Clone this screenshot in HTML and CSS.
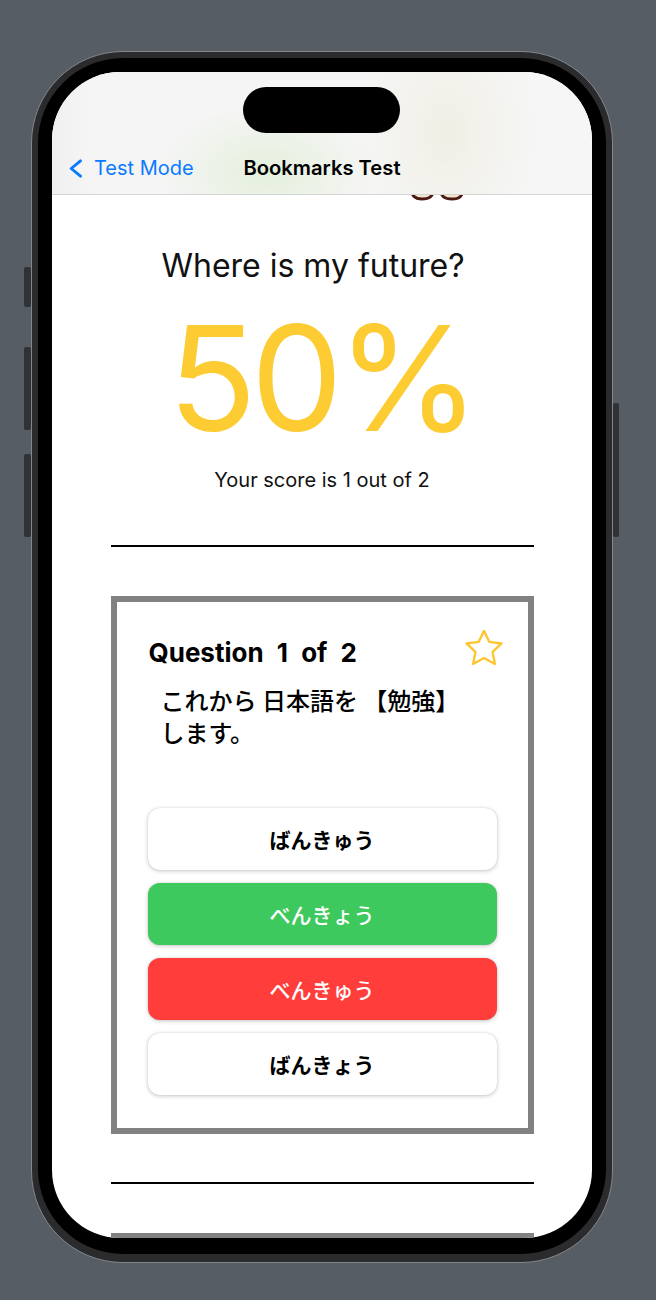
FILE: index.html
```html
<!DOCTYPE html>
<html lang="en">
<head>
<meta charset="utf-8">
<title>Bookmarks Test</title>
<link rel="stylesheet" href="styles.css">
</head>
<body>
<div class="phone">
  <span class="side-btn btn-action"></span>
  <span class="side-btn btn-vol-up"></span>
  <span class="side-btn btn-vol-down"></span>
  <span class="side-btn btn-power"></span>
  <div class="bezel">
    <div class="screen">
      <main class="content">
        <div class="hero">
          <svg class="feet" width="60" height="16" viewBox="0 0 60 16">
            <path d="M3 2 C3 12 8 14 14 14 C21 14 25 12 25 5" fill="#f4e7d2" stroke="#4b1a12" stroke-width="3" stroke-linecap="round"/>
            <path d="M33 5 C33 12 37 14 44 14 C51 14 55 12 55 2" fill="#f4e7d2" stroke="#4b1a12" stroke-width="3" stroke-linecap="round"/>
          </svg>
        </div>
        <h1 class="title">Where is my future?</h1>
        <div class="percent">50%</div>
        <p class="score">Your score is 1 out of 2</p>
        <hr class="divider">
        <section class="card">
          <div class="card-head">
            <h2 class="q-num">Question 1 of 2</h2>
            <svg class="star" width="38" height="37" viewBox="1.6 1.6 20.8 19.8">
              <path d="M12 2.4l2.95 6.05 6.65.85-4.9 4.6 1.25 6.6L12 17.25 6.05 20.5l1.25-6.6-4.9-4.6 6.65-.85z" fill="none" stroke="#fdc631" stroke-width="1.3" stroke-linejoin="round"/>
            </svg>
          </div>
          <p class="q-text">これから 日本語を 【勉強】 します。</p>
          <div class="answers">
            <button class="answer">ばんきゅう</button>
            <button class="answer correct">べんきょう</button>
            <button class="answer wrong">べんきゅう</button>
            <button class="answer">ばんきょう</button>
          </div>
        </section>
        <hr class="divider divider-2">
        <section class="card card-next"></section>
      </main>
      <header class="navbar">
        <div class="island"></div>
        <div class="nav-row">
          <a class="back">
            <svg class="chev" width="15" height="19" viewBox="0 0 15 19">
              <path d="M12.5 1.8 L3.2 9.5 L12.5 17.2" fill="none" stroke="#0a7aff" stroke-width="2.9" stroke-linecap="round" stroke-linejoin="round"/>
            </svg>
            <span>Test Mode</span>
          </a>
          <div class="nav-title">Bookmarks Test</div>
          <div></div>
        </div>
      </header>
    </div>
  </div>
</div>
</body>
</html>
```

FILE: styles.css
```css
html, body {
  margin: 0;
  padding: 0;
}
body {
  background: #575d65;
  width: 656px;
  height: 1300px;
  overflow: hidden;
  font-family: Inter, "Noto Sans", sans-serif;
}

.phone {
  position: relative;
  box-sizing: border-box;
  margin: 51px 0 0 31px;
  width: 582px;
  height: 1212px;
  border: 1px solid #83868a;
  border-radius: 92px;
  background: #2b2b2d;
  padding: 6px 6px 8px 6px;
}
.side-btn {
  position: absolute;
  background: #303236;
  border-radius: 2px;
}
.btn-action { left: -8px; top: 215px; width: 7px; height: 40px; }
.btn-vol-up { left: -8px; top: 295px; width: 7px; height: 83px; }
.btn-vol-down { left: -8px; top: 402px; width: 7px; height: 83px; }
.btn-power { left: 581px; top: 351px; width: 6px; height: 134px; }

.bezel {
  background: #000;
  border-radius: 85px;
  padding: 14px 14px 16px 14px;
}
.screen {
  position: relative;
  width: 540px;
  height: 1166px;
  border-radius: 68px;
  overflow: hidden;
  background: #fff;
}

/* nav bar */
.navbar {
  position: absolute;
  left: 0;
  top: 0;
  width: 540px;
  height: 123px;
  box-sizing: border-box;
  border-bottom: 1px solid #d4d4d4;
  background:
    radial-gradient(ellipse 110px 70px at 215px 100px, rgba(222, 238, 210, 0.7), rgba(222, 238, 210, 0) 100%),
    radial-gradient(ellipse 90px 130px at 395px 60px, rgba(238, 236, 222, 0.7), rgba(238, 236, 222, 0) 100%),
    linear-gradient(90deg, #f0f0f0 0px, #f5f5f5 40px, #f6f6f6 100%);
}
.island {
  position: absolute;
  left: 191px;
  top: 15px;
  width: 157px;
  height: 46px;
  border-radius: 23px;
  background: #000;
}
.nav-row {
  position: absolute;
  left: 0;
  right: 0;
  top: 84px;
  display: grid;
  grid-template-columns: 1fr auto 1fr;
  align-items: start;
  height: 24px;
}
.back {
  display: flex;
  align-items: flex-start;
  padding-left: 16px;
  color: #0a7aff;
  font-size: 20px;
  line-height: 24px;
}
.chev {
  margin-top: 3px;
  margin-right: 11px;
}
.nav-title {
  font-size: 20.2px;
  line-height: 24px;
  font-weight: 600;
  color: #000;
}

/* content */
.content {
  display: flex;
  flex-direction: column;
  align-items: center;
}
.hero {
  height: 129px;
  width: 100%;
  display: flex;
  align-items: flex-end;
  padding-left: 356px;
  box-sizing: border-box;
}
.feet { display: block; }

.title {
  margin: 45px 18px 0 0;
  font-size: 32px;
  line-height: 40px;
  font-weight: 400;
  color: #111;
}
.percent {
  margin-top: 18px;
  font-size: 146px;
  line-height: 148px;
  font-weight: 400;
  color: #fdcb32;
  letter-spacing: -6px;
  padding-right: 2px;
}
.score {
  margin: 16px 0 0 0;
  font-size: 20px;
  line-height: 24px;
  color: #111;
}
.divider {
  box-sizing: border-box;
  width: 423px;
  height: 2px;
  margin: 53px 0 0 0;
  border: none;
  background: #000;
}
.divider-2 {
  margin-top: 48px;
}
.card {
  box-sizing: border-box;
  width: 423px;
  margin-top: 49px;
  border: 6px solid #818181;
  padding: 27px 0 33px 0;
}
.card-next {
  height: 200px;
}
.card-head {
  display: flex;
  justify-content: space-between;
  align-items: flex-start;
  padding: 0 25px 0 32px;
}
.q-num {
  margin: 8px 0 0 0;
  font-size: 26px;
  line-height: 32px;
  font-weight: 700;
  color: #000;
  word-spacing: 7px;
}
.star { display: block; }
.q-text {
  margin: 15px 0 0 0;
  padding: 0 54px 0 44px;
  font-family: "Noto Sans CJK JP", sans-serif;
  font-size: 24px;
  line-height: 32px;
  font-weight: 500;
  color: #000;
}
.answers {
  margin-top: 60px;
  padding: 0 31px;
  display: flex;
  flex-direction: column;
  gap: 13px;
}
.answer {
  height: 62px;
  border: none;
  border-radius: 12px;
  background: #fff;
  box-shadow: 0 1px 4px rgba(0, 0, 0, 0.22), 0 0 1px rgba(0, 0, 0, 0.2);
  font-family: "Noto Sans CJK JP", sans-serif;
  font-size: 21px;
  font-weight: 700;
  color: #000;
  padding: 0;
}
.answer.correct {
  background: #3ec95f;
  color: #fff;
  font-weight: 500;
}
.answer.wrong {
  background: #ff3d3b;
  color: #fff;
  font-weight: 500;
}
```
